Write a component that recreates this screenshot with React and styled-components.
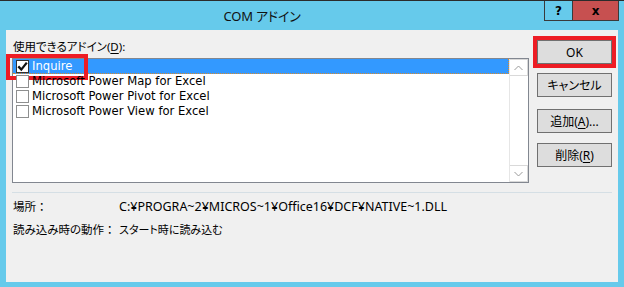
import React from "react";
import styled, { createGlobalStyle } from "styled-components";

const Global = createGlobalStyle`
  html, body { margin: 0; padding: 0; background: #66caeb; }
  body { width: 624px; height: 287px; overflow: hidden; }
`;

const FONT = `"Noto Sans", "Noto Sans CJK JP", sans-serif`;
const LIST_FONT = `"DejaVu Sans", "Noto Sans CJK JP", sans-serif`;

const Window = styled.div`
  width: 624px;
  height: 287px;
  box-sizing: border-box;
  background: #66caeb;
  border-top: 1px solid #2b2b2b;
  display: flex;
  flex-direction: column;
  font-family: ${FONT};
  font-feature-settings: "palt";
  color: #000;
`;

const TitleBar = styled.div`
  height: 29px;
  display: flex;
  align-items: flex-start;
  padding-right: 5px;
`;

const Title = styled.div`
  flex: 1;
  text-align: center;
  padding-right: 20px;
  font-size: 13px;
  letter-spacing: -0.2px;
  line-height: 30px;
  color: #111;
`;

const CapButton = styled.div`
  height: 20px;
  width: ${(p) => p.$w}px;
  box-sizing: border-box;
  background: ${(p) => p.$bg};
  border: 1px solid #3a3a3a;
  border-top: none;
  border-left-width: ${(p) => (p.$noLeft ? 0 : 1)}px;
  display: flex;
  align-items: center;
  justify-content: center;
  font-family: "DejaVu Sans", sans-serif;
  font-weight: bold;
  font-size: 12px;
  color: #000;
`;

const Client = styled.div`
  flex: 1;
  margin: 0 6px 5px 6px;
  background: #f0f0f0;
  display: flex;
  flex-direction: column;
  padding: 0 6px;
`;

const Top = styled.div`
  display: flex;
  gap: 8px;
`;

const LeftCol = styled.div`
  display: flex;
  flex-direction: column;
  width: 517px;
`;

const FieldLabel = styled.div`
  font-size: 11.5px;
  line-height: 16px;
  padding: 9px 0 3px 1px;
`;

const U = styled.span`
  text-decoration: underline;
  text-underline-offset: 2px;
`;

const ListBox = styled.div`
  height: 125px;
  box-sizing: border-box;
  border: 1px solid #828790;
  background: #fff;
  display: flex;
`;

const Rows = styled.div`
  flex: 1;
  display: flex;
  flex-direction: column;
`;

const Row = styled.div`
  position: relative;
  height: 15px;
  line-height: 15px;
  box-sizing: border-box;
  display: flex;
  align-items: center;
  gap: 3px;
  padding-left: 3px;
  font-family: ${LIST_FONT};
  font-size: 11.6px;
  background: ${(p) => (p.$selected ? "#3399ff" : "transparent")};
  color: ${(p) => (p.$selected ? "#fff" : "#000")};
  border-right: ${(p) => (p.$selected ? "1px dotted #d98a2c" : "none")};
  border-bottom: ${(p) => (p.$selected ? "1px dotted #d98a2c" : "none")};
`;

const Highlight = styled.div`
  position: absolute;
  left: -7px;
  top: -5px;
  width: 82px;
  height: 26px;
  box-sizing: border-box;
  border: 4px solid #ed1c24;
  pointer-events: none;
`;

const Box = styled.span`
  width: 13px;
  height: 13px;
  box-sizing: border-box;
  border: 1px solid ${(p) => (p.$checked ? "#333" : "#8e8f8f")};
  background: #fff;
  display: flex;
  align-items: center;
  justify-content: center;
  flex: none;
`;

const ScrollBar = styled.div`
  width: 18px;
  display: flex;
  flex-direction: column;
  justify-content: space-between;
  border-left: 1px solid #e6e6e6;
  background: #fff;
`;

const ScrollBtn = styled.div`
  height: 17px;
  box-sizing: border-box;
  border: 1px solid #d9d9d9;
  border-left: none;
  display: flex;
  align-items: center;
  justify-content: center;
`;

const RightCol = styled.div`
  display: flex;
  flex-direction: column;
  padding-top: 10px;
  width: 75px;
`;

const Button = styled.div`
  height: 24px;
  box-sizing: border-box;
  border: 1px solid #707070;
  background: #dddddd;
  display: flex;
  align-items: center;
  justify-content: center;
  font-size: 12px;
  margin-top: ${(p) => p.$mt || 0}px;
  outline: ${(p) => (p.$flag ? "4px solid #ed1c24" : "none")};
`;

const Separator = styled.div`
  height: 1px;
  background: #d5dfe5;
  margin-top: 9px;
`;

const Info = styled.div`
  display: grid;
  grid-template-columns: 106px auto;
  row-gap: 7px;
  padding: 6px 0 0 1px;
  font-size: 12px;
  line-height: 16px;
`;

const InfoLabel = styled.span`
  font-size: 11.5px;
  white-space: nowrap;
`;

const Colon = styled.span`
  font-feature-settings: normal;
`;

const Value = styled.span`
  font-size: ${(p) => p.$size || 12}px;
  white-space: nowrap;
`;

const Check = () => (
  <svg width="11" height="11" viewBox="0 0 11 11">
    <path d="M1.3 5.4 L4.3 8.6 L9.8 1.6" stroke="#111" strokeWidth="2.3" fill="none" />
  </svg>
);

const Chevron = ({ up }) => (
  <svg width="9" height="6" viewBox="0 0 9 6">
    <path
      d={up ? "M0.5 5 L4.5 1 L8.5 5" : "M0.5 1 L4.5 5 L8.5 1"}
      stroke="#9a9a9a"
      strokeWidth="1"
      fill="none"
    />
  </svg>
);

const items = [
  { name: "Inquire", checked: true },
  { name: "Microsoft Power Map for Excel" },
  { name: "Microsoft Power Pivot for Excel" },
  { name: "Microsoft Power View for Excel" },
];

export default function App() {
  return (
    <>
      <Global />
      <Window>
        <TitleBar>
          <Title>COM アドイン</Title>
          <CapButton $w={29} $bg="#66caeb">?</CapButton>
          <CapButton $w={46} $bg="#c75050" $noLeft>x</CapButton>
        </TitleBar>
        <Client>
          <Top>
            <LeftCol>
              <FieldLabel>
                使用できるアドイン(<U>D</U>):
              </FieldLabel>
              <ListBox>
                <Rows>
                  {items.map((it, i) => (
                    <Row key={it.name} $selected={i === 0}>
                      <Box $checked={it.checked}>{it.checked && <Check />}</Box>
                      {it.name}
                      {i === 0 && <Highlight />}
                    </Row>
                  ))}
                </Rows>
                <ScrollBar>
                  <ScrollBtn>
                    <Chevron up />
                  </ScrollBtn>
                  <ScrollBtn>
                    <Chevron />
                  </ScrollBtn>
                </ScrollBar>
              </ListBox>
            </LeftCol>
            <RightCol>
              <Button $flag>OK</Button>
              <Button $mt={9}>キャンセル</Button>
              <Button $mt={12}>
                追加(<U>A</U>)...
              </Button>
              <Button $mt={10}>
                削除(<U>R</U>)
              </Button>
            </RightCol>
          </Top>
          <Separator />
          <Info>
            <InfoLabel>
              場所<Colon>：</Colon>
            </InfoLabel>
            <Value $size={12.5}>C:¥PROGRA~2¥MICROS~1¥Office16¥DCF¥NATIVE~1.DLL</Value>
            <InfoLabel>
              読み込み時の動作<Colon>：</Colon>
            </InfoLabel>
            <Value $size={11}>スタート時に読み込む</Value>
          </Info>
        </Client>
      </Window>
    </>
  );
}
